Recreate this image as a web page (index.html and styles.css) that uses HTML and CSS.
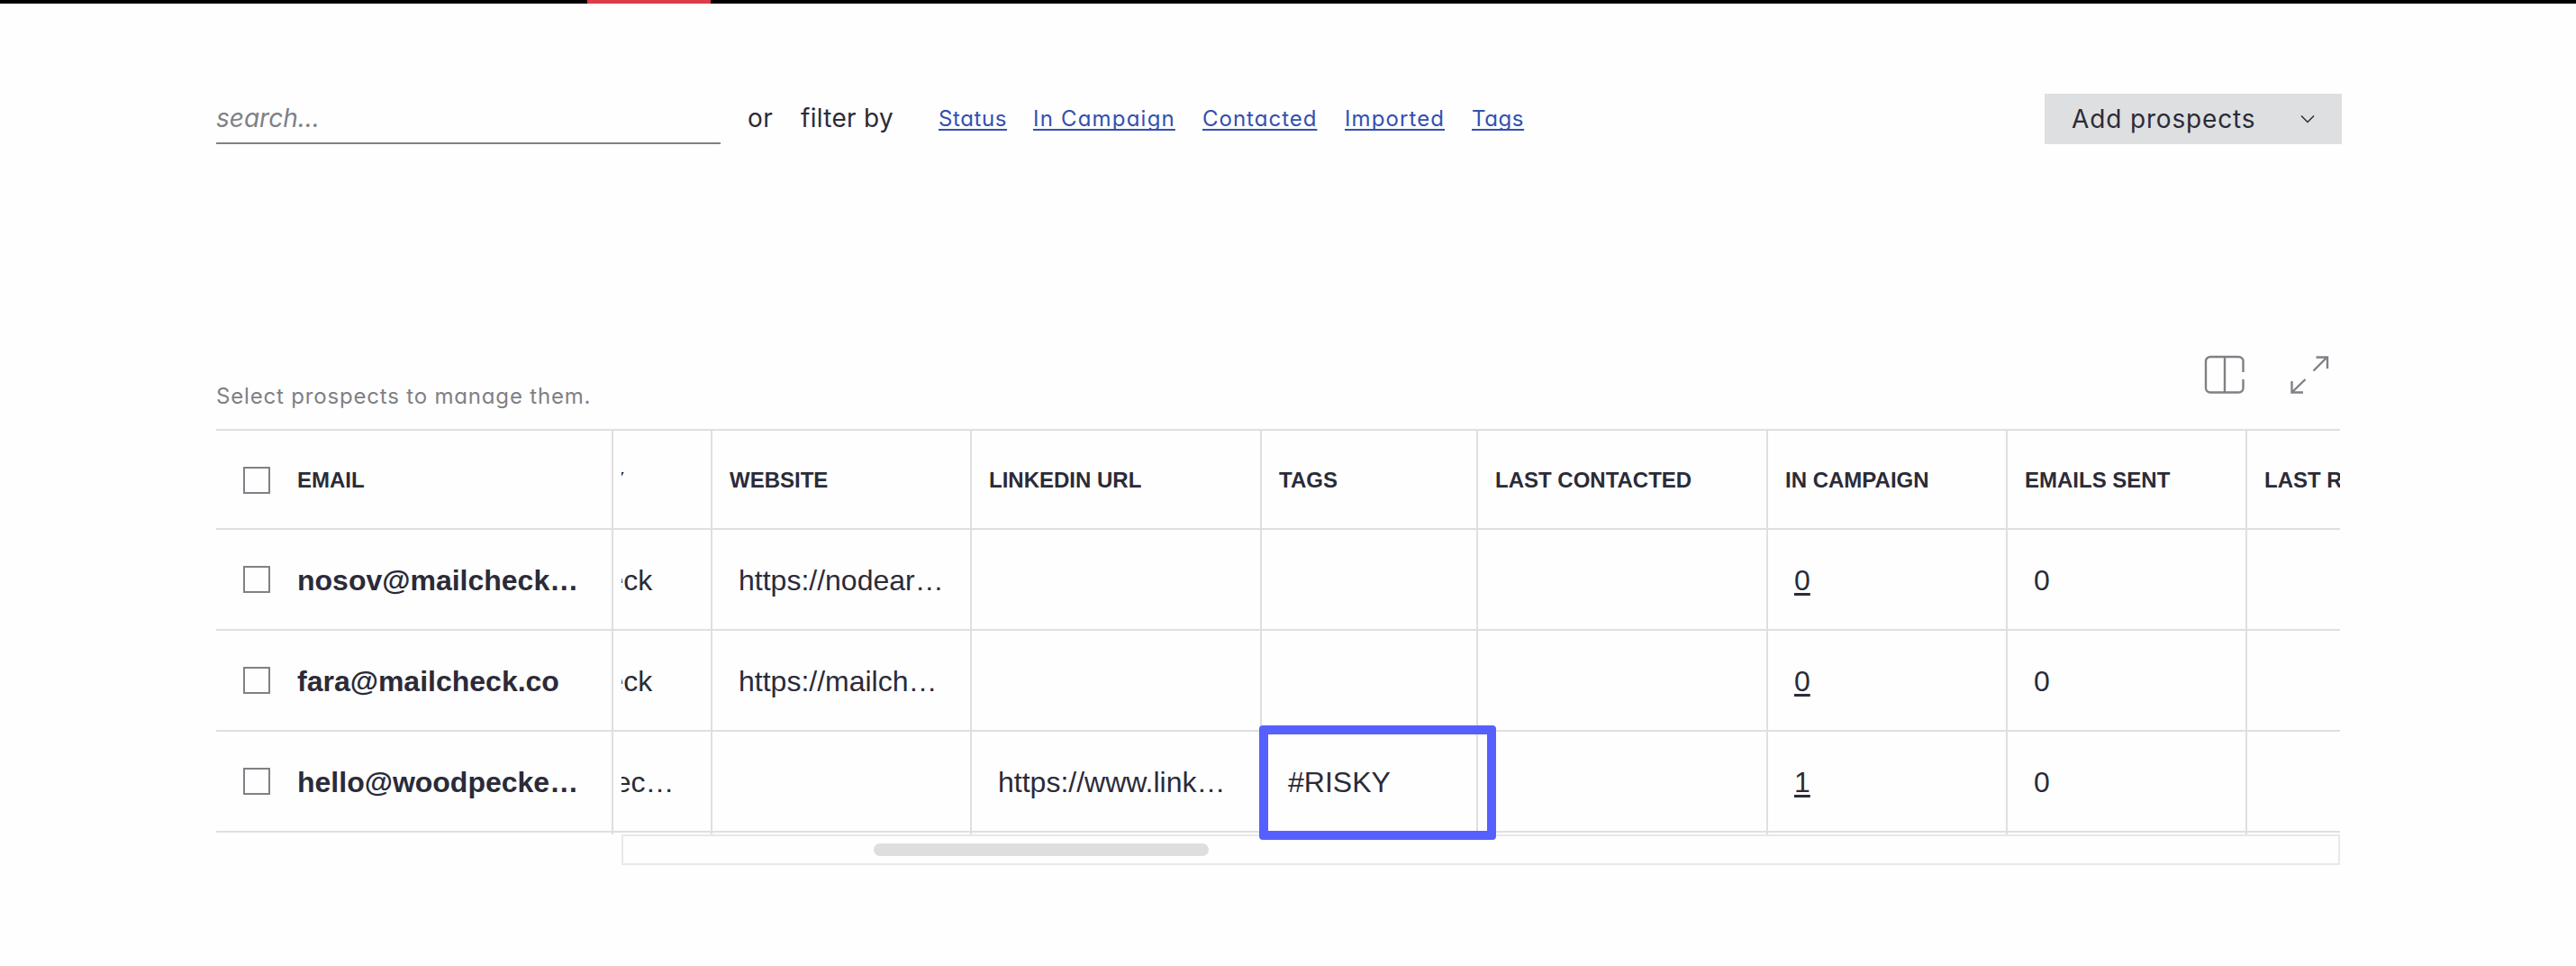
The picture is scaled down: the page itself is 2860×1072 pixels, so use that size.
FILE: index.html
```html
<!DOCTYPE html>
<html lang="en">
<head>
<meta charset="utf-8">
<title>Prospects</title>
<link rel="stylesheet" href="styles.css">
</head>
<body>
<div class="nav-strip"><div class="nav-active"></div></div>
<main class="page">
  <header class="toolbar">
    <div class="search">search...</div>
    <span class="or">or</span>
    <span class="filter-by">filter by</span>
    <nav class="filters">
      <a class="f-status">Status</a>
      <a class="f-campaign">In Campaign</a>
      <a class="f-contacted">Contacted</a>
      <a class="f-imported">Imported</a>
      <a class="f-tags">Tags</a>
    </nav>
    <button class="add"><span>Add prospects</span>
      <svg width="18" height="12" viewBox="0 0 18 12" fill="none" stroke="#2b2b38" stroke-width="1.5"><path d="M2 2.500 9 9.500 16 2.500"/></svg>
    </button>
  </header>

  <div class="table-head">
    <p class="hint">Select prospects to manage them.</p>
    <div class="tools">
      <svg width="46" height="44" viewBox="0 0 46 44" fill="none" stroke="#808086" stroke-width="2.400"><path d="M43.500 19V7a5 5 0 0 0-5-5H7a5 5 0 0 0-5 5v29.500a5 5 0 0 0 5 5h31.500a5 5 0 0 0 5-5V27M23 2v39.500"/></svg>
      <svg width="44" height="44" viewBox="0 0 44 44" fill="none" stroke="#808086" stroke-width="2.400"><path d="M26.500 17.500 41.500 2.500M29.500 2.500h12.500v12.500M17.500 27 2.500 41.500M2.500 29v12.500h12.500"/></svg>
    </div>
  </div>

  <section class="grid">
    <div class="pinned">
      <div class="row head"><div class="cell"><i class="box"></i><span>EMAIL</span></div></div>
      <div class="row"><div class="cell"><i class="box"></i><span>nosov@mailcheck…</span></div></div>
      <div class="row"><div class="cell"><i class="box"></i><span>fara@mailcheck.co</span></div></div>
      <div class="row"><div class="cell"><i class="box"></i><span>hello@woodpecke…</span></div></div>
      <div class="tail"><div class="cell"></div></div>
    </div>
    <div class="scroller">
      <div class="viewport">
        <div class="row head"><div class="cell">COMPANY</div><div class="cell">WEBSITE</div><div class="cell">LINKEDIN URL</div><div class="cell">TAGS</div><div class="cell">LAST CONTACTED</div><div class="cell">IN CAMPAIGN</div><div class="cell">EMAILS SENT</div><div class="cell">LAST REPLIED</div></div>
        <div class="row"><div class="cell">Mailcheck</div><div class="cell">https://nodear…</div><div class="cell"></div><div class="cell"></div><div class="cell"></div><div class="cell"><u>0</u></div><div class="cell">0</div><div class="cell"></div></div>
        <div class="row"><div class="cell">Mailcheck</div><div class="cell">https://mailch…</div><div class="cell"></div><div class="cell"></div><div class="cell"></div><div class="cell"><u>0</u></div><div class="cell">0</div><div class="cell"></div></div>
        <div class="row"><div class="cell">Woodpec…</div><div class="cell"></div><div class="cell">https://www.link…</div><div class="cell marked">#RISKY</div><div class="cell"></div><div class="cell"><u>1</u></div><div class="cell">0</div><div class="cell"></div></div>
        <div class="tail"><div class="cell"></div><div class="cell"></div><div class="cell"></div><div class="cell"></div><div class="cell"></div><div class="cell"></div><div class="cell"></div><div class="cell"></div></div>
      </div>
      <div class="scrollbar"><div class="thumb"></div></div>
    </div>
  </section>
</main>
</body>
</html>
```

FILE: styles.css
```css
*, *::after { box-sizing: border-box; }
body {
  margin: 0;
  background: #fefefe;
  color: #2b2b38;
  font-family: Inter, "Liberation Sans", sans-serif;
  font-feature-settings: "cv11";
}
.nav-strip { height: 4px; background: #000; }
.nav-active { width: 137px; height: 4px; margin-left: 652px; background: #dc3b4a; }
.page { width: 2360px; margin-left: 240px; }

.toolbar { display: flex; height: 156px; padding-top: 100px; font-size: 28px; line-height: 54px; white-space: nowrap; }
.search { width: 560px; height: 56px; border-bottom: 2px solid #808086; color: #808086; font-style: italic; }
.or { width: 59px; margin-left: 30px; letter-spacing: 0.5px; }
.filter-by { width: 153px; letter-spacing: 0.3px; }
.filters { display: flex; gap: 30px; font-size: 24px; line-height: 55px; }
.filters a { color: #3350b0; text-decoration: underline; text-decoration-thickness: 2px; text-underline-offset: 3px; text-decoration-skip-ink: none; }
.f-status { width: 75px; letter-spacing: 0.6px; }
.f-campaign { width: 158px; letter-spacing: 1.2px; }
.f-contacted { width: 128px; letter-spacing: 1px; }
.f-imported { width: 111px; letter-spacing: 1.100px; }
.f-tags { width: 58px; letter-spacing: 0.6px; }
.add {
  display: flex; align-items: center; justify-content: space-between;
  width: 330px; height: 56px; margin-left: auto; padding: 0 29px 0 30px;
  border: 0; background: #dedfe0; color: #2b2b38;
  font: inherit; font-feature-settings: inherit; letter-spacing: 0.85px;
}

.table-head { display: flex; justify-content: space-between; height: 316px; padding-top: 234px; }
.hint { margin: 28px 0 0; color: #808086; font-size: 24px; line-height: 36px; letter-spacing: 0.82px; }
.tools { display: flex; gap: 49px; margin-right: 14px; }

.grid { display: flex; width: 2358px; font-family: "Liberation Sans", Arial, sans-serif; font-size: 32px; white-space: nowrap; }
.row { display: flex; height: 112px; border-bottom: 2px solid #dfdfe0; }
.head { border-top: 2px solid #dfdfe0; font-size: 24px; font-weight: 700; }
.tail { display: flex; height: 2px; }
.cell { flex: none; display: flex; align-items: center; border-right: 2px solid #dfdfe0; }
.row .cell { padding-top: 2px; }
.pinned { width: 450px; }
.pinned .cell { width: 441px; padding-left: 30px; gap: 30px; font-weight: 700; }
.box { width: 30px; height: 30px; margin-top: -2px; border: 2px solid #808086; }
.head .box { margin-top: 0; }
.scroller { width: 1908px; }
.viewport { overflow-x: clip; overflow-y: visible; }
.viewport .row, .viewport .tail { width: 2200px; margin-left: -139px; }
.viewport .cell { width: 266px; padding-left: 29px; }
.viewport .head .cell { padding-left: 19px; }
.viewport .cell:nth-child(1) { width: 240px; padding-left: 31px; }
.viewport .head .cell:nth-child(1) { padding-left: 21px; }
.viewport .cell:nth-child(2) { width: 288px; }
.viewport .cell:nth-child(3), .viewport .cell:nth-child(5) { width: 322px; }
.viewport .cell:nth-child(4) { width: 240px; }
.cell u { text-decoration-thickness: 3px; text-underline-offset: 3px; }
.marked { position: relative; }
.marked::after { content: ""; position: absolute; left: -3px; top: -7px; width: 263px; height: 127px; border: 10px solid #5560ff; border-radius: 4px; }
.scrollbar { height: 34px; border: 2px solid #e8e8e9; padding: 8px 0 0 278px; }
.thumb { width: 372px; height: 14px; border-radius: 7px; background: #dedede; }
```
